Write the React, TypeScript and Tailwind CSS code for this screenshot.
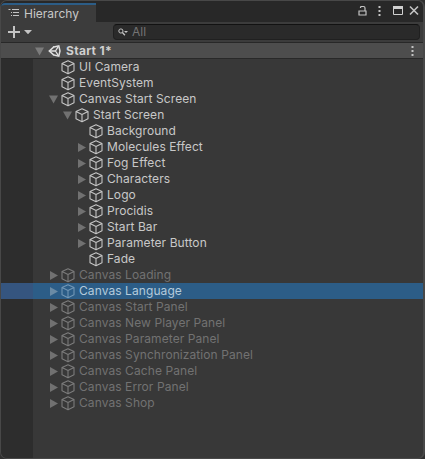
import React from "react";

type Item = { name: string; level: number; arrow?: "open" | "closed"; off?: boolean; selected?: boolean };

const items: Item[] = [
  { name: "UI Camera", level: 0 },
  { name: "EventSystem", level: 0 },
  { name: "Canvas Start Screen", level: 0, arrow: "open" },
  { name: "Start Screen", level: 1, arrow: "open" },
  { name: "Background", level: 2 },
  { name: "Molecules Effect", level: 2, arrow: "closed" },
  { name: "Fog Effect", level: 2, arrow: "closed" },
  { name: "Characters", level: 2, arrow: "closed" },
  { name: "Logo", level: 2, arrow: "closed" },
  { name: "Procidis", level: 2, arrow: "closed" },
  { name: "Start Bar", level: 2, arrow: "closed" },
  { name: "Parameter Button", level: 2, arrow: "closed" },
  { name: "Fade", level: 2 },
  { name: "Canvas Loading", level: 0, arrow: "closed", off: true },
  { name: "Canvas Language", level: 0, arrow: "closed", off: true, selected: true },
  { name: "Canvas Start Panel", level: 0, arrow: "closed", off: true },
  { name: "Canvas New Player Panel", level: 0, arrow: "closed", off: true },
  { name: "Canvas Parameter Panel", level: 0, arrow: "closed", off: true },
  { name: "Canvas Synchronization Panel", level: 0, arrow: "closed", off: true },
  { name: "Canvas Cache Panel", level: 0, arrow: "closed", off: true },
  { name: "Canvas Error Panel", level: 0, arrow: "closed", off: true },
  { name: "Canvas Shop", level: 0, arrow: "closed", off: true },
];

const indents = ["pl-4", "pl-[30px]", "pl-11"];

function Arrow({ kind, className }: { kind?: "open" | "closed"; className: string }) {
  return (
    <svg width="9" height="16" viewBox="0 0 9 16" fill="currentColor" className={`shrink-0 ${className}`}>
      {kind === "open" && <path d="M0 4.5h9L4.5 12.5z" />}
      {kind === "closed" && <path d="M1 4v9l8-4.5z" />}
    </svg>
  );
}

function Cube({ className }: { className: string }) {
  return (
    <svg width="14" height="16" viewBox="0 0 14 16" fill="none" stroke="currentColor" strokeWidth="1.1" strokeLinejoin="round" className={`shrink-0 ${className}`}>
      <path d="M7 1.7 13 4.5v7.2L7 14.7 1 11.7V4.5zM1 4.6l6 2.8 6-2.8M7 7.4v7.1" />
    </svg>
  );
}

function UnityLogo() {
  return (
    <svg width="14" height="16" viewBox="0 0 14 16" fill="none" stroke="#e0e0e0" className="shrink-0">
      <path d="M6.2 3.6 1.3 8l4.9 4.4M5 4.3l5.8-1.5 1.2 5.2-1.2 5.2L5 11.7" strokeWidth="1.5" />
      <path d="M1.3 8h6.2M7.5 8l3-4.8M7.5 8l3 4.8" strokeWidth="1.3" />
    </svg>
  );
}

function Dots() {
  return (
    <svg width="3" height="10" viewBox="0 0 3 10" fill="#c4c4c4">
      <path d="M.5 0h2v2h-2zM.5 4h2v2h-2zM.5 8h2v2h-2z" />
    </svg>
  );
}

function Row({ item }: { item: Item }) {
  const glyph = item.selected ? "text-[#7196b5]" : item.off ? "text-[#7b7b7b]" : "text-[#c4c4c4]";
  const label = item.selected ? "text-[#b4cbdc]" : item.off ? "text-[#727272]" : "text-[#c8c8c8]";
  return (
    <div className="flex h-4">
      <div className={`w-8 shrink-0 ${item.selected ? "bg-[#35557f]" : "bg-[#2d2d2d]"}`} />
      <div className={`flex flex-1 items-center ${item.selected ? "bg-[#2c5d87]" : ""} ${indents[item.level]}`}>
        <Arrow kind={item.arrow} className={item.selected ? "text-[#6b8ba5]" : "text-[#717171]"} />
        <Cube className={`ml-[3px] ${glyph}`} />
        <span className={`ml-1 whitespace-nowrap text-[12px] leading-4 tracking-[0.08px] ${label}`}>{item.name}</span>
      </div>
    </div>
  );
}

export default function App() {
  return (
    <div className="h-[459px] w-[425px] overflow-hidden bg-[#303030] font-['Inter',sans-serif]">
      <div className="flex h-[459px] w-[425px] flex-col overflow-hidden rounded-[7px] border border-r-2 border-[#484848] bg-[#383838]">
        <div className="flex h-[21px] shrink-0 bg-[#282828] pt-[2px]">
          <div className="flex w-[95px] rounded-tl-[4px] border-t-2 border-[#2c5d87] bg-[#3c3c3c] pl-[7px]">
            <svg width="12" height="12" viewBox="0 0 12 12" className="mt-[3px]" fill="#c4c4c4">
              <path d="M.5 1h2v1h-2zM4 1h7v1H4zM3 4h1v1H3zM5 4h6v1H5zM3 7h1v1H3zM5 7h6v1H5z" />
            </svg>
            <span className="ml-1 text-[12px] leading-[18px] text-[#c8c8c8]">Hierarchy</span>
          </div>
          <div className="ml-auto flex items-start pr-1 pt-[2px]">
            <svg width="9" height="11" viewBox="0 0 9 11" fill="none" stroke="#c4c4c4" className="mr-[11px]">
              <path d="M1 6h7v4H1zM2.5 3V2.5q0-1 1-1h2q1.5 0 1.5 1.5v3" strokeWidth="1.2" />
            </svg>
            <div className="pt-px"><Dots /></div>
            <svg width="10" height="11" viewBox="0 0 10 11" fill="none" stroke="#d0d0d0" className="ml-3">
              <path d="M.5 2v7.5h9V2" />
              <path d="M0 2.5h10" strokeWidth="3" />
            </svg>
            <svg width="10" height="11" viewBox="0 0 10 11" stroke="#c4c4c4" strokeWidth="1.6" className="ml-[6px]">
              <path d="m1 1.5 8 8M9 1.5l-8 8" />
            </svg>
          </div>
        </div>

        <div className="flex h-5 shrink-0 items-center bg-[#3c3c3c] pr-[3px]">
          <svg width="24" height="12" viewBox="0 0 24 12" fill="#c4c4c4" className="ml-[7px] shrink-0">
            <path d="M5 0h2v5h5v2H7v5H5V7H0V5h5zM16 4h8l-4 4.2z" />
          </svg>
          <div className="ml-[81px] flex h-4 flex-1 items-center rounded-[4px] border border-[#202020] border-t-[#121212] bg-[#2a2a2a] pl-1">
            <svg width="10" height="8" viewBox="0 0 10 8" fill="none" stroke="#c4c4c4">
              <circle cx="2.9" cy="3" r="2.1" />
              <path d="m4.4 4.5 2.5 2.7" strokeWidth="1.3" />
              <path d="M6 3h4L8 5z" fill="#c4c4c4" stroke="none" />
            </svg>
            <span className="ml-[4px] text-[12px] leading-[14px] text-[#747474]">All</span>
          </div>
        </div>

        <div className="flex h-[17px] shrink-0 items-center border-y border-[#282828] bg-[#4d4d4d] pl-[34px] pr-[9px]">
          <Arrow kind="open" className="text-[#7c7c7c]" />
          <div className="ml-1"><UnityLogo /></div>
          <span className="ml-1 text-[12px] font-bold leading-[15px] tracking-[0.3px] text-[#d0d0d0]">Start 1*</span>
          <div className="ml-auto"><Dots /></div>
        </div>

        <div className="shrink-0">
          {items.map((item) => <Row key={item.name} item={item} />)}
        </div>
        <div className="w-8 flex-1 bg-[#2d2d2d]" />
      </div>
    </div>
  );
}
